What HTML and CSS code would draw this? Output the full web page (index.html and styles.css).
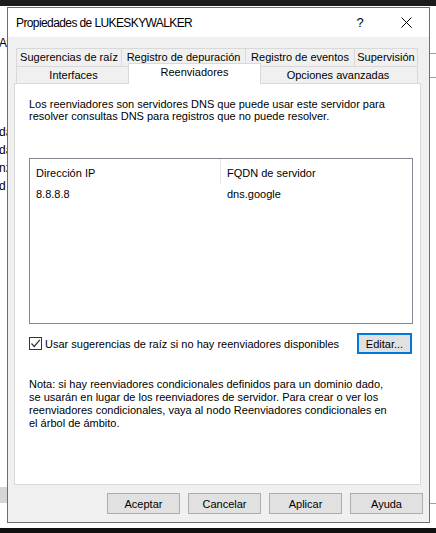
FILE: index.html
```html
<!DOCTYPE html>
<html lang="es">
<head>
<meta charset="utf-8">
<title>Propiedades de LUKESKYWALKER</title>
<link rel="stylesheet" href="styles.css">
</head>
<body>
<div class="desktop">
  <div class="topbar"></div>
  <div class="behind">
    <span class="frag f1">Ay</span>
    <span class="frag f2">da</span>
    <span class="frag f3">da</span>
    <span class="frag f4">nz</span>
    <span class="frag f5">d</span>
    <div class="lgray"></div>
    <div class="rline r1"></div>
    <div class="rline r2"></div>
    <div class="rline r3"></div>
  </div>
  <div class="blackbar"></div>

  <div class="dialog">
    <div class="titlebar">
      <span class="title">Propiedades de LUKESKYWALKER</span>
      <span class="tbtn help">?</span>
      <span class="tbtn close">
        <svg width="11" height="11" viewBox="0 0 11 11"><path d="M0.5 0.5 L10.5 10.5 M10.5 0.5 L0.5 10.5" stroke="#000" stroke-width="1" fill="none"/></svg>
      </span>
    </div>
    <div class="body">
      <div class="tabs">
        <div class="tabrow row1">
          <div class="tab w1">Sugerencias de raíz</div>
          <div class="tab w2">Registro de depuración</div>
          <div class="tab w3">Registro de eventos</div>
          <div class="tab w4">Supervisión</div>
        </div>
        <div class="tabrow row2">
          <div class="tab w5">Interfaces</div>
          <div class="tab w6 sel">Reenviadores</div>
          <div class="tab w7">Opciones avanzadas</div>
        </div>
      </div>
      <div class="panel">
        <p class="intro">Los reenviadores son servidores DNS que puede usar este servidor para resolver consultas DNS para registros que no puede resolver.</p>
        <div class="listbox">
          <div class="lhead">
            <div class="col c1">Dirección IP</div>
            <div class="col c2">FQDN de servidor</div>
          </div>
          <div class="lrow">
            <div class="col c1">8.8.8.8</div>
            <div class="col c2">dns.google</div>
          </div>
        </div>
        <div class="optrow">
          <label class="check">
            <span class="box">
              <svg width="11" height="11" viewBox="0 0 11 11"><path d="M1.5 5.5 L4.2 8.5 L9.8 1.8" stroke="#333" stroke-width="1.2" fill="none"/></svg>
            </span>
            <span>Usar sugerencias de raíz si no hay reenviadores disponibles</span>
          </label>
          <button class="btn focus">Editar...</button>
        </div>
        <p class="note">Nota: si hay reenviadores condicionales definidos para un dominio dado, se usarán en lugar de los reenviadores de servidor. Para crear o ver los reenviadores condicionales, vaya al nodo Reenviadores condicionales en el árbol de ámbito.</p>
      </div>
      <div class="buttons">
        <button class="btn">Aceptar</button>
        <button class="btn">Cancelar</button>
        <button class="btn">Aplicar</button>
        <button class="btn">Ayuda</button>
      </div>
    </div>
  </div>
</div>
</body>
</html>
```

FILE: styles.css
```css
html, body {
  margin: 0;
  padding: 0;
}
body {
  width: 436px;
  height: 533px;
  overflow: hidden;
  background: #ffffff;
  font-family: "Liberation Sans", Arial, sans-serif;
  font-size: 11px;
  color: #000;
}
.desktop {
  position: relative;
  width: 436px;
  height: 533px;
  overflow: hidden;
}
.topbar {
  height: 6px;
  background: #1c1c1c;
}
.behind {
  position: relative;
  height: 521px;
  background: #ffffff;
}
.frag {
  position: absolute;
  left: -1px;
  font-size: 12px;
  color: #000;
}
.f1 { top: 30px; }
.f2 { top: 119px; }
.f3 { top: 137px; }
.f4 { top: 155px; }
.f5 { top: 173px; }
.lgray {
  position: absolute;
  left: 0;
  top: 481px;
  width: 8px;
  height: 16px;
  background: #d6d6d6;
}
.rline {
  position: absolute;
  left: 430px;
  width: 6px;
  height: 1px;
  background: #a0a0a0;
}
.r1 { top: 47px; }
.r2 { top: 71px; }
.r3 { top: 497px; }
.blackbar {
  position: absolute;
  left: 0;
  top: 528px;
  width: 436px;
  height: 5px;
  background: #0f0f0f;
}

.dialog {
  position: absolute;
  left: 7px;
  top: 7px;
  width: 421px;
  height: 514px;
  border: 1px solid #6e6e6e;
  background: #f0f0f0;
  display: flex;
  flex-direction: column;
}
.titlebar {
  height: 29px;
  background: #ffffff;
  display: flex;
  align-items: center;
  padding-left: 8px;
}
.title {
  font-size: 12px;
  letter-spacing: -0.6px;
  flex: 1;
  padding-top: 1px;
}
.tbtn {
  display: flex;
  align-items: center;
  justify-content: center;
  height: 29px;
}
.help {
  width: 46px;
  font-size: 13px;
}
.close {
  width: 46px;
}
.body {
  flex: 1;
  display: flex;
  flex-direction: column;
  padding: 11px 8px 0 6px;
}
.tabs {
  padding-left: 2px;
  padding-right: 3px;
}
.tabrow {
  display: flex;
  height: 18px;
}
.row2 {
  height: 17px;
  position: relative;
  z-index: 2;
}
.tab {
  box-sizing: border-box;
  border: 1px solid #d9d9d9;
  border-right-width: 0;
  border-bottom-width: 0;
  background: #f0f0f0;
  text-align: center;
  line-height: 17px;
  white-space: nowrap;
}
.tab:last-child {
  border-right-width: 1px;
}
.w1 { width: 105px; }
.w2 { width: 124px; }
.w3 { width: 109px; }
.w4 { width: 64px; }
.w5 { width: 114px; }
.w6 { width: 129px; }
.w7 { width: 159px; }
.row2 .tab { line-height: 15px; padding-top: 1px; }
.tab.sel {
  background: #ffffff;
  border-right-width: 1px;
  margin: -3px -2px 0 -2px;
  width: 133px;
  height: 21px;
  line-height: 17px;
  padding-top: 0;
  position: relative;
  z-index: 3;
}
.sel + .tab { border-left-width: 0; }

.panel {
  height: 400px;
  background: #ffffff;
  border: 1px solid #d9d9d9;
  margin-top: 0;
  padding: 0 8px 0 14px;
  position: relative;
  z-index: 1;
}
.intro {
  margin: 14px 0 0 0;
  line-height: 12px;
  width: 360px;
}
.listbox {
  margin-top: 36px;
  width: 382px;
  height: 164px;
  border: 1px solid #828790;
  background: #fff;
}
.lhead, .lrow {
  display: flex;
}
.lhead {
  height: 25px;
  align-items: flex-start;
}
.lhead .col {
  padding-top: 8px;
  line-height: 13px;
}
.lrow {
  height: 20px;
  align-items: center;
}
.col {
  box-sizing: border-box;
  padding-left: 6px;
}
.c1 { width: 190px; }
.c2 { flex: 1; }
.lhead .c2 {
  border-left: 1px solid #e5e5e5;
  height: 25px;
}
.lrow .c2 { padding-left: 7px; }
.optrow {
  display: flex;
  align-items: center;
  justify-content: space-between;
  margin-top: 9px;
  width: 383px;
}
.check {
  display: flex;
  align-items: center;
  gap: 3px;
}
.box {
  box-sizing: border-box;
  width: 13px;
  height: 13px;
  border: 1px solid #333;
  display: flex;
  align-items: center;
  justify-content: center;
}
.btn {
  box-sizing: border-box;
  font-family: "Liberation Sans", Arial, sans-serif;
  font-size: 11px;
  color: #000;
  background: #e1e1e1;
  border: 1px solid #adadad;
  height: 21px;
  width: 73px;
  padding: 0;
  margin: 0;
}
.btn.focus {
  width: 55px;
  border: 2px solid #0078d7;
}
.note {
  margin: 24px 0 0 0;
  line-height: 13px;
  width: 361px;
}
.buttons {
  display: flex;
  justify-content: flex-end;
  gap: 8px;
  margin-top: 8px;
  margin-right: -2px;
}
```
